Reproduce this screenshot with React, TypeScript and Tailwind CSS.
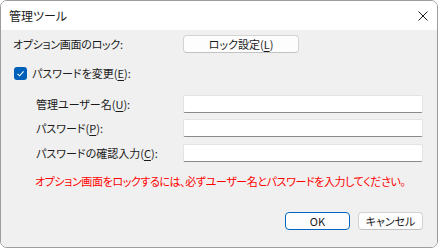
const font = "font-['Noto_Sans_CJK_JP','Noto_Sans',sans-serif] [font-feature-settings:'palt']";

const Acc = ({ c }: { c: string }) => <span className="underline underline-offset-[2px]">{c}</span>;

const Field = ({ label, acc, top }: { label: string; acc: string; top: string }) => (
    <div className={`flex items-center h-[18px] ${top}`}>
        <div className="w-[182px] pl-[35px] text-[11px] leading-[18px] text-[#1a1a1a]">
            {label}(<Acc c={acc} />):
        </div>
        <div className="w-[240px] h-[18px] bg-white border border-[#e3e3e3] border-b-[#8a8a8a] rounded-[2px]" />
    </div>
);

const App: React.FC = () => {
    return (
        <div className={`w-[439px] h-[248px] bg-white ${font}`}>
            <div className="w-[438px] h-[248px] flex flex-col border border-[#9c9c9c] rounded-[7px] overflow-hidden">
                <div className="h-[29px] bg-white flex items-center justify-between pl-[8px] pr-[9px] shrink-0">
                    <span className="text-[12px] text-[#1a1a1a] leading-none">管理ツール</span>
                    <svg width="10" height="10" viewBox="0 0 10 10">
                        <path d="M0.5 0.5 L9.5 9.5 M9.5 0.5 L0.5 9.5" stroke="#1a1a1a" strokeWidth="1" />
                    </svg>
                </div>

                <div className="flex-1 bg-[#f0f0f0] flex flex-col pt-[5px]">
                    <div className="flex items-center h-[18px]">
                        <div className="w-[182px] pl-[12px] text-[11px] tracking-[-0.3px] text-[#1a1a1a]">オプション画面のロック:</div>
                        <button className="w-[116px] h-[18px] bg-[#fdfdfd] border border-[#d3d3d3] border-b-[#c2c2c2] rounded-[4px] text-[11px] leading-none text-[#1a1a1a]">
                            ロック設定(<Acc c="L" />)
                        </button>
                    </div>

                    <div className="flex items-center h-[18px] mt-[11px] pl-[13px] gap-[5px]">
                        <div className="w-[13px] h-[13px] rounded-[3px] bg-[#005fb8] flex items-center justify-center">
                            <svg width="9" height="9" viewBox="0 0 9 9">
                                <path d="M1.5 4.8 L3.6 6.8 L7.6 2.3" fill="none" stroke="white" strokeWidth="1.1" />
                            </svg>
                        </div>
                        <span className="text-[11px] text-[#1a1a1a]">パスワードを変更(<Acc c="E" />):</span>
                    </div>

                    <Field label="管理ユーザー名" acc="U" top="mt-[13px]" />
                    <Field label="パスワード" acc="P" top="mt-[6px]" />
                    <Field label="パスワードの確認入力" acc="C" top="mt-[7px]" />

                    <div className="mt-[11px] pl-[34px] h-[16px] text-[11px] leading-[16px] tracking-[-0.4px] whitespace-nowrap text-[#ff0000]">
                        オプション画面をロックするには、必ずユーザー名とパスワードを入力してください。
                    </div>

                    <div className="flex justify-end gap-[8px] pr-[14px] mt-[23px]">
                        <button className="w-[65px] h-[18px] bg-[#fdfdfd] border border-[#0067c0] rounded-[4px] text-[11px] leading-none text-[#1a1a1a]">OK</button>
                        <button className="w-[65px] h-[18px] bg-[#fdfdfd] border border-[#d3d3d3] border-b-[#c2c2c2] rounded-[4px] text-[11px] leading-none text-[#1a1a1a]">キャンセル</button>
                    </div>
                </div>
            </div>
        </div>
    )
}

export default App
